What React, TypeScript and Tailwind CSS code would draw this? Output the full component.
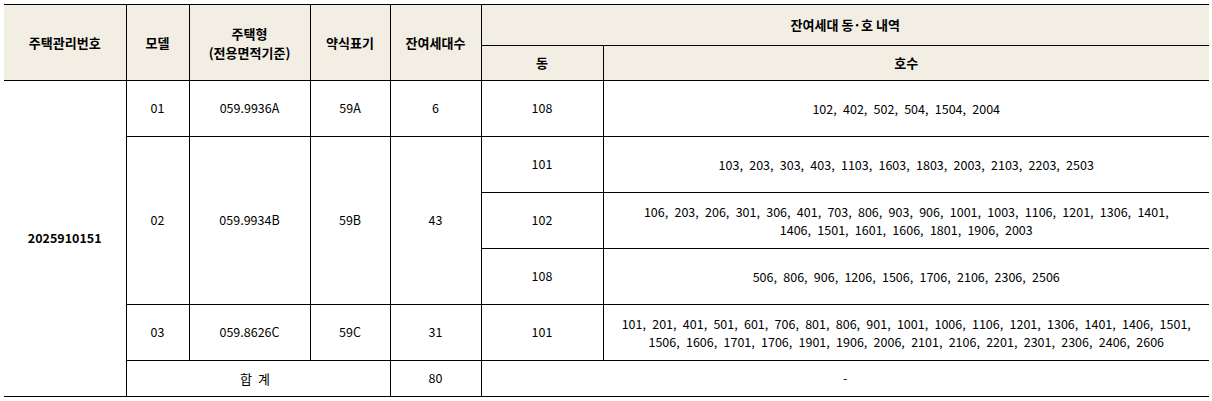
type Sub = { dong: string; hosu: string[] };
type ModelRow = { model: string; type: string; short: string; count: number; subs: Sub[] };

const rows: ModelRow[] = [
  {
    model: "01",
    type: "059.9936A",
    short: "59A",
    count: 6,
    subs: [{ dong: "108", hosu: ["102, 402, 502, 504, 1504, 2004"] }],
  },
  {
    model: "02",
    type: "059.9934B",
    short: "59B",
    count: 43,
    subs: [
      { dong: "101", hosu: ["103, 203, 303, 403, 1103, 1603, 1803, 2003, 2103, 2203, 2503"] },
      {
        dong: "102",
        hosu: [
          "106, 203, 206, 301, 306, 401, 703, 806, 903, 906, 1001, 1003, 1106, 1201, 1306, 1401,",
          "1406, 1501, 1601, 1606, 1801, 1906, 2003",
        ],
      },
      { dong: "108", hosu: ["506, 806, 906, 1206, 1506, 1706, 2106, 2306, 2506"] },
    ],
  },
  {
    model: "03",
    type: "059.8626C",
    short: "59C",
    count: 31,
    subs: [
      {
        dong: "101",
        hosu: [
          "101, 201, 401, 501, 601, 706, 801, 806, 901, 1001, 1006, 1106, 1201, 1306, 1401, 1406, 1501,",
          "1506, 1606, 1701, 1706, 1901, 1906, 2006, 2101, 2106, 2201, 2301, 2306, 2406, 2606",
        ],
      },
    ],
  },
];

const cell = "border border-black text-center align-middle p-0";
const th = `${cell} bg-[#f2eee4] font-bold text-[13px]`;

export default function App() {
  const totalSubs = rows.reduce((n, r) => n + r.subs.length, 0);
  return (
    <div className="bg-white px-[4px] pt-[4px] pb-[5px] text-black [font-family:'Noto_Sans_CJK_KR','Noto_Sans',sans-serif] text-[12.5px]">
      <table className="w-[1205px] table-fixed border-collapse">
        <colgroup>
          <col className="w-[122px]" />
          <col className="w-[63px]" />
          <col className="w-[121px]" />
          <col className="w-[80px]" />
          <col className="w-[91px]" />
          <col className="w-[122px]" />
          <col />
        </colgroup>
        <thead>
          <tr className="h-[41px]">
            <th rowSpan={2} className={`${th} border-l-0`}>주택관리번호</th>
            <th rowSpan={2} className={th}>모델</th>
            <th rowSpan={2} className={`${th} leading-[19px]`}>
              주택형
              <br />
              (전용면적기준)
            </th>
            <th rowSpan={2} className={th}>약식표기</th>
            <th rowSpan={2} className={th}>잔여세대수</th>
            <th colSpan={2} className={`${th} border-r-0`}>잔여세대 동·호 내역</th>
          </tr>
          <tr className="h-[35px]">
            <th className={th}>동</th>
            <th className={`${th} border-r-0`}>호수</th>
          </tr>
        </thead>
        <tbody>
          {rows.map((r, ri) =>
            r.subs.map((s, si) => (
              <tr key={`${r.model}-${s.dong}`} className="h-[56px]">
                {ri === 0 && si === 0 && (
                  <td rowSpan={totalSubs + 1} className={`${cell} border-l-0 font-bold`}>
                    2025910151
                  </td>
                )}
                {si === 0 && (
                  <>
                    <td rowSpan={r.subs.length} className={cell}>{r.model}</td>
                    <td rowSpan={r.subs.length} className={cell}>{r.type}</td>
                    <td rowSpan={r.subs.length} className={cell}>{r.short}</td>
                    <td rowSpan={r.subs.length} className={cell}>{r.count}</td>
                  </>
                )}
                <td className={cell}>{s.dong}</td>
                <td className={`${cell} border-r-0 leading-[18px] [word-spacing:3.5px]`}>
                  {s.hosu.map((line) => (
                    <div key={line}>{line}</div>
                  ))}
                </td>
              </tr>
            ))
          )}
          <tr className="h-[36px]">
            <td colSpan={3} className={cell}>
              <span className="tracking-[6px] text-[13px]">합계</span>
            </td>
            <td className={cell}>80</td>
            <td colSpan={2} className={`${cell} border-r-0`}>-</td>
          </tr>
        </tbody>
      </table>
    </div>
  );
}
